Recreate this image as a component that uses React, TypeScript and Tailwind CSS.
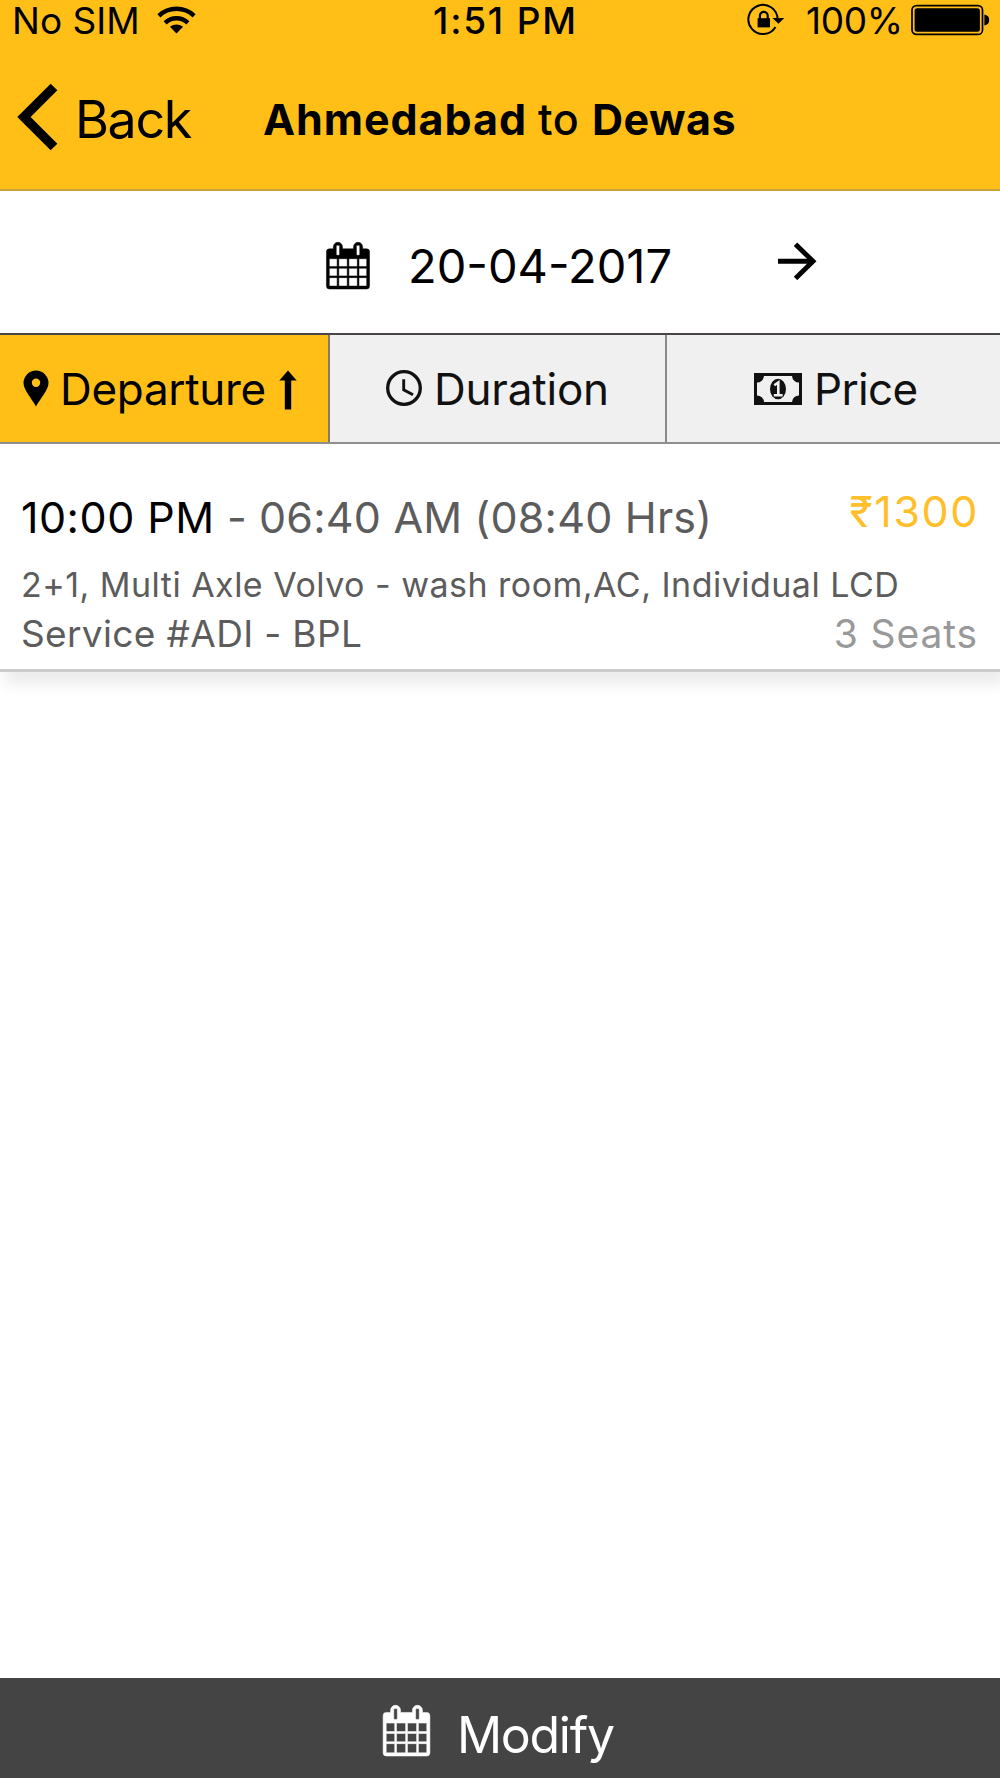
import React from 'react';
import { clsx } from 'clsx';

type IconProps = { className?: string };

function WifiIcon({ className }: IconProps) {
  return (
    <svg viewBox="0 0 40 30" className={className} fill="none" stroke="currentColor" strokeWidth="4.6">
      <path d="M1.8 11.2a26.5 26.5 0 0 1 36.4 0" />
      <path d="M8.2 18.4a17.2 17.2 0 0 1 23.6 0" />
      <path d="M20 29.5 13.2 22.6q6.8-4.6 13.6 0Z" fill="currentColor" stroke="none" />
    </svg>
  );
}

function RotationLockIcon({ className }: IconProps) {
  return (
    <svg viewBox="0 0 38 34" className={className}>
      <path d="M28.500 24A14.600 14.600 0 1 1 30.600 16.500" fill="none" stroke="currentColor" strokeWidth="2" />
      <path d="M25.500 15h11.800l-5.900 5.800Z" fill="currentColor" />
      <path d="M10.600 15.200h12.400v9.200H10.600Z" fill="currentColor" />
      <path d="M12.900 16v-3.200a3.900 3.900 0 0 1 7.800 0V16" fill="none" stroke="currentColor" strokeWidth="2.200" />
    </svg>
  );
}

function BatteryIcon({ className }: IconProps) {
  return (
    <svg viewBox="0 0 80 32" className={className}>
      <rect x="1" y="1.6" width="70.500" height="28.800" rx="4.500" fill="none" stroke="currentColor" strokeWidth="1.700" />
      <rect x="3.600" y="4.200" width="65.300" height="23.600" rx="2.500" fill="currentColor" />
      <path d="M73.400 10.600q4.800.8 4.800 5.400t-4.800 5.400Z" fill="currentColor" />
    </svg>
  );
}

function CalendarIcon({ className }: IconProps) {
  return (
    <svg viewBox="0 0 44 48" className={className}>
      <path
        fillRule="evenodd"
        fill="currentColor"
        stroke="currentColor"
        strokeWidth=".5"
        d="M3 7h4V5a4.700 4.700 0 0 1 9.400 0v2h11.200V5A4.700 4.700 0 0 1 37 5v2h4a3 3 0 0 1 3 3v35a3 3 0 0 1-3 3H3a3 3 0 0 1-3-3V10a3 3 0 0 1 3-3Zm7-2.600v8.200q0 1 1 1h1.400q1 0 1-1V4.400q0-1-1-1H11q-1 0-1 1Zm20.600 0v8.200q0 1 1 1H33q1 0 1-1V4.400q0-1-1-1h-1.400q-1 0-1 1ZM2.900 17v8h8v-8Zm9.700 0v8h8.600v-8Zm10.300 0v8h8.600v-8Zm10.300 0v8h7.900v-8ZM2.900 26.800v7.800h8v-7.800Zm9.700 0v7.800h8.600v-7.800Zm10.300 0v7.800h8.600v-7.800Zm10.300 0v7.800h7.900v-7.800ZM2.900 36.400v8.600h8v-8.600Zm9.700 0v8.600h8.600v-8.600Zm10.300 0v8.600h8.600v-8.600Zm10.300 0v8.600h7.900v-8.600Z"
      />
    </svg>
  );
}

function PinIcon({ className }: IconProps) {
  return (
    <svg viewBox="0 0 26 37" className={className}>
      <path
        fillRule="evenodd"
        fill="currentColor"
        d="M13 .5A12.500 12.500 0 0 1 25.500 13C25.500 20 17 29 13 36.500 9 29 .5 20 .5 13A12.500 12.500 0 0 1 13 .5Zm0 8a4.200 4.200 0 1 0 0 8.400 4.200 4.200 0 0 0 0-8.400Z"
      />
    </svg>
  );
}

function UpArrowIcon({ className }: IconProps) {
  return (
    <svg viewBox="0 0 18 40" className={className} fill="currentColor">
      <path d="M9 .5 17.700 10.500H12.200V39.500H5.800V10.500H.3Z" />
    </svg>
  );
}

function ClockIcon({ className }: IconProps) {
  return (
    <svg viewBox="0 0 36 36" className={className} fill="none" stroke="currentColor">
      <circle cx="18" cy="18" r="16.300" strokeWidth="3.300" />
      <path d="M17.700 9.300v10.500l9.300 5" strokeWidth="2.900" />
    </svg>
  );
}

function BanknoteIcon({ className }: IconProps) {
  return (
    <svg viewBox="0 0 48 32" className={className}>
      <path
        fillRule="evenodd"
        fill="currentColor"
        d="M0 0h48v32H0ZM10 3A7 7 0 0 1 3 9.500v13A7 7 0 0 1 10 29h28a7 7 0 0 1 7-6.500v-13A7 7 0 0 1 38 3Z"
      />
      <ellipse cx="24" cy="16" rx="8" ry="10.300" fill="currentColor" />
      <path d="M20.300 12.200 24.300 9.400V21M19.800 22.200h8.800" fill="none" stroke="#f0f0f0" strokeWidth="2.600" />
    </svg>
  );
}

function StatusBar() {
  return (
    <div className="flex h-[40px] items-start text-[37px] leading-[45px]">
      <span className="-mt-[2px] ml-[12px] w-[134px]">No SIM</span>
      <WifiIcon className="mt-[5px] ml-[11px] h-[29px] w-[39px]" />
      <span className="-mt-[2px] ml-[237px] w-[150px] font-medium tracking-[1.8px]">1:51 PM</span>
      <RotationLockIcon className="mt-[3px] ml-[164px] h-[34px] w-[38px]" />
      <span className="-mt-[2px] ml-[21px] w-[99px] tracking-[-0.3px]">100%</span>
      <BatteryIcon className="mt-[4px] ml-[6px] h-[32px] w-[80px]" />
    </div>
  );
}

function Header() {
  return (
    <header className="h-[191px] border-b-2 border-[#cba23a] bg-[#ffbf17]">
      <StatusBar />
      <div className="flex items-start">
        <button className="flex items-start pl-[17px]">
          <svg viewBox="0 0 42 68" className="mt-[43px] h-[68px] w-[42px]">
            <path d="M37 4 7 34l30 30" fill="none" stroke="currentColor" strokeWidth="9.500" />
          </svg>
          <span className="mt-[54px] ml-[16px] w-[124px] text-left text-[52px] leading-none tracking-[-1.400px]">Back</span>
        </button>
        <h1 className="mt-[58px] ml-[64px] flex text-[43px] leading-none">
          <span className="w-[275px] font-bold tracking-[0.95px]">Ahmedabad</span>
          <span className="w-[54px] font-medium tracking-[0.5px]">to</span>
          <span className="font-bold tracking-[0.5px]">Dewas</span>
        </h1>
      </div>
    </header>
  );
}

function DateBar() {
  return (
    <div className="flex h-[142px] items-start">
      <CalendarIcon className="mt-[51px] ml-[326px] h-[47px] w-[44px] overflow-visible" />
      <span className="mt-[51px] ml-[38px] w-[269px] text-[47px] leading-none">20-04-2017</span>
      <svg viewBox="0 0 39 38" className="mt-[51px] ml-[101px] h-[38px] w-[39px]" fill="none" stroke="currentColor" strokeWidth="4.900">
        <path d="M0 19.300h35" />
        <path d="M17.500 2.200 35 19.300 17.500 36.400" />
      </svg>
    </div>
  );
}

type TabProps = { active?: boolean; className: string; children: React.ReactNode };

function Tab({ active, className, children }: TabProps) {
  return (
    <button
      className={clsx(
        'flex items-start text-[44px] leading-none',
        active ? 'bg-[#ffbf17] text-black' : 'bg-[#f0f0f0] text-[#111]',
        className,
      )}
    >
      {children}
    </button>
  );
}

function SortTabs() {
  return (
    <nav className="flex h-[111px] border-t-2 border-b-2 border-t-[#4a4548] border-b-[#8e8e8e]">
      <Tab active className="w-[330px] border-r-2 border-[#85796a] pl-[23px]">
        <PinIcon className="mt-[35px] h-[37px] w-[26px]" />
        <span className="mt-[32px] ml-[11px] w-[208px] text-left tracking-[-0.3px]">Departure</span>
        <UpArrowIcon className="mt-[35px] ml-[11px] h-[40px] w-[18px]" />
      </Tab>
      <Tab className="w-[337px] border-r-2 border-[#8a8a8a] pl-[56px]">
        <ClockIcon className="mt-[35px] h-[36px] w-[36px]" />
        <span className="mt-[32px] ml-[12px] tracking-[-0.2px]">Duration</span>
      </Tab>
      <Tab className="flex-1 pl-[87px]">
        <BanknoteIcon className="mt-[38px] h-[32px] w-[48px]" />
        <span className="mt-[32px] ml-[12px] tracking-[-0.650px]">Price</span>
      </Tab>
    </nav>
  );
}

function BusCard() {
  return (
    <article className="h-[228px] border-b-3 border-[#cbcbcb] bg-white pr-[22px] pl-[21px] text-[#5c5c5c] shadow-[5px_12px_14px_0_rgba(0,0,0,0.08)]">
      <div className="flex h-[124px] items-start justify-between text-[43px] leading-none">
        <p className="flex pt-[52px]">
          <span className="w-[206px] tracking-[0.5px] text-black">10:00 PM</span>
          <span className="w-[32px]">-</span>
          <span className="tracking-[0.2px] whitespace-nowrap">06:40 AM (08:40 Hrs)</span>
        </p>
        <p className="-mr-[1px] pt-[46px] tracking-[1.600px] text-[#ffbf2b]">₹1300</p>
      </div>
      <p className="h-[46px] text-[34px] leading-none tracking-[0.48px] whitespace-nowrap">
        2+1, Multi Axle Volvo - wash room,AC, Individual LCD
      </p>
      <div className="flex items-start justify-between">
        <p className="pt-[1px] text-[37px] leading-none tracking-[0.35px]">Service #ADI - BPL</p>
        <p className="text-[39px] leading-none tracking-[0.9px] text-[#999]">3 Seats</p>
      </div>
    </article>
  );
}

export default function App() {
  return (
    <div className="flex h-[1778px] w-[1000px] flex-col overflow-x-clip bg-white font-['Inter',sans-serif] text-black">
      <Header />
      <DateBar />
      <SortTabs />
      <BusCard />
      <main className="flex-1" />
      <button className="flex h-[100px] items-start bg-[#444] text-white">
        <CalendarIcon className="mt-[27px] ml-[383px] h-[51px] w-[47px] overflow-visible" />
        <span className="mt-[32px] ml-[27px] text-[50px] leading-none tracking-[-1.300px]">Modify</span>
      </button>
    </div>
  );
}
